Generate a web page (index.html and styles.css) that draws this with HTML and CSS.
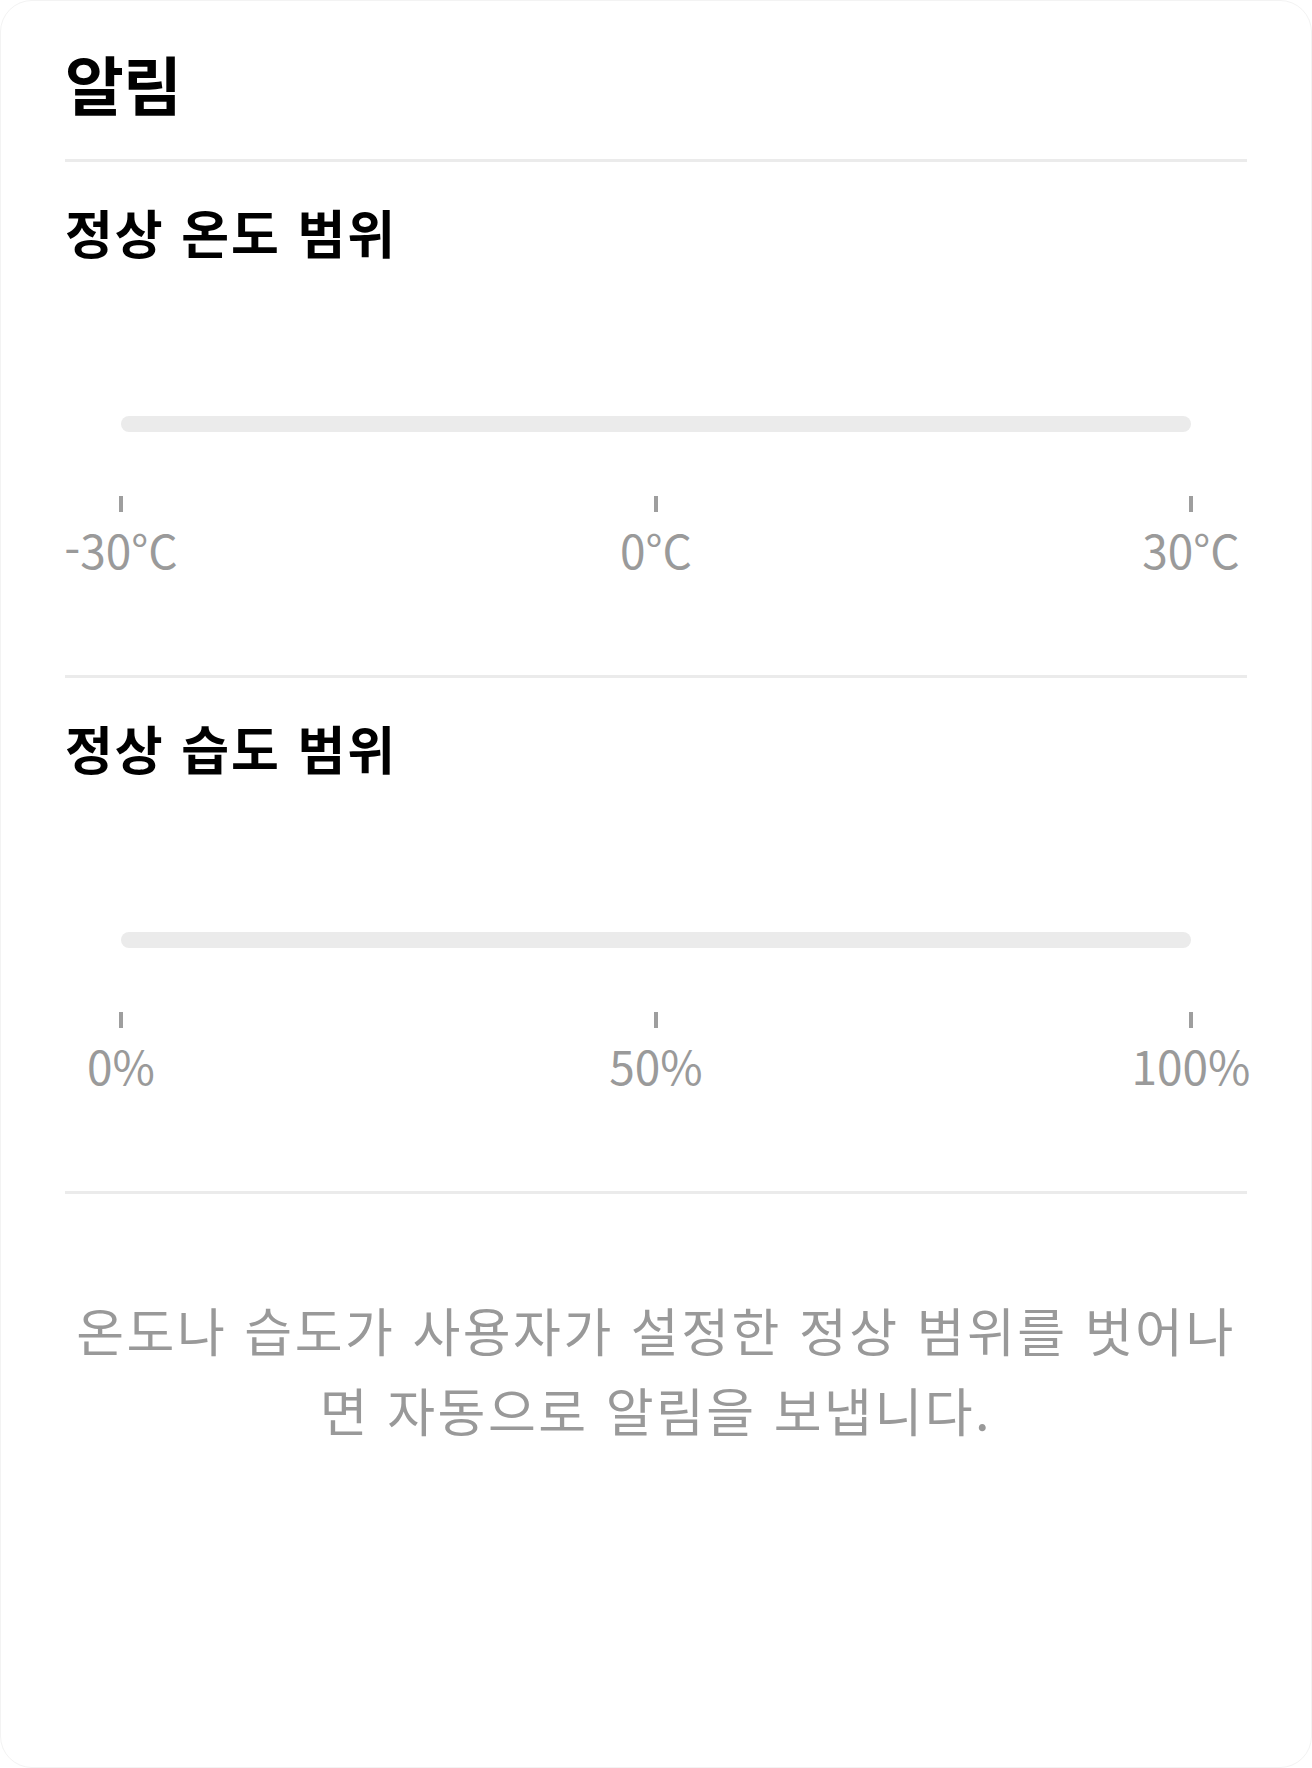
FILE: index.html
```html
<!DOCTYPE html>
<html lang="ko">
<head>
<meta charset="utf-8">
<title>알림</title>
<link rel="stylesheet" href="styles.css">
</head>
<body>
<main class="card">
  <h1 class="title">알림</h1>
  <hr class="divider">
  <section class="range">
    <h2 class="range-title">정상 온도 범위</h2>
    <div class="slider">
      <div class="track"></div>
      <div class="scale">
        <div class="mark"><span class="tick"></span><span class="mark-label">-30°C</span></div>
        <div class="mark"><span class="tick"></span><span class="mark-label">0°C</span></div>
        <div class="mark"><span class="tick"></span><span class="mark-label">30°C</span></div>
      </div>
    </div>
  </section>
  <hr class="divider">
  <section class="range">
    <h2 class="range-title">정상 습도 범위</h2>
    <div class="slider">
      <div class="track"></div>
      <div class="scale">
        <div class="mark"><span class="tick"></span><span class="mark-label">0%</span></div>
        <div class="mark"><span class="tick"></span><span class="mark-label">50%</span></div>
        <div class="mark"><span class="tick"></span><span class="mark-label">100%</span></div>
      </div>
    </div>
  </section>
  <hr class="divider">
  <p class="note">온도나 습도가 사용자가 설정한 정상 범위를 벗어나<br>면 자동으로 알림을 보냅니다.</p>
</main>
</body>
</html>
```

FILE: styles.css
```css
html, body {
  margin: 0;
  padding: 0;
  background: #ffffff;
}

body {
  font-family: "Noto Sans CJK KR", "Noto Sans", sans-serif;
  color: #000;
}

.card {
  box-sizing: border-box;
  height: 1768px;
  padding: 40px 64px;
  background: #fff;
  border: 1px solid #f3f3f3;
  border-radius: 32px;
  display: flex;
  flex-direction: column;
}

.title {
  margin: 0;
  font-size: 64px;
  line-height: 82px;
  font-weight: 700;
  letter-spacing: -1px;
}

.divider {
  margin: 36px 0 0;
  border: 0;
  height: 3px;
  background: #ebebeb;
}

.range {
  display: flex;
  flex-direction: column;
}

.range-title {
  margin: 40px 0 0;
  font-size: 52px;
  line-height: 60px;
  font-weight: 600;
  letter-spacing: 2px;
}

.slider {
  margin: 154px 56px 0;
  display: flex;
  flex-direction: column;
}

.track {
  height: 16px;
  border-radius: 8px;
  background: #ebebeb;
}

.scale {
  margin-top: 64px;
  display: flex;
  justify-content: space-between;
}

.mark {
  width: 0;
  display: flex;
  flex-direction: column;
  align-items: center;
}

.tick {
  flex: none;
  width: 4px;
  height: 16px;
  background: #9e9e9e;
}

.mark-label {
  margin-top: 9px;
  font-family: "Noto Sans CJK KR", "Noto Sans", sans-serif;
  font-size: 46px;
  line-height: 56px;
  color: #9a9a9a;
  white-space: nowrap;
}

.range + .divider {
  margin-top: 98px;
}

.note {
  margin: 96px 0 0;
  font-size: 52px;
  line-height: 80px;
  color: #999;
  text-align: center;
  letter-spacing: 2.5px;
}
```
